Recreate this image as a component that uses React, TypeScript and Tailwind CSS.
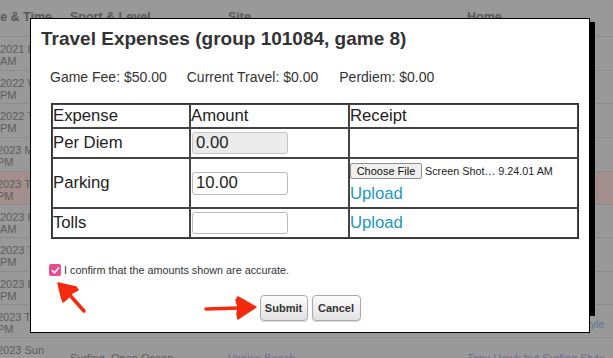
import React from "react";

const rows = [
  { a: "2021 F", b: "AM", h: "h-[34px]", off: "", tint: false, c2: "", c3: "", c4: "" },
  { a: "2022 W", b: "PM", h: "h-[33px]", off: "", tint: false, c2: "", c3: "", c4: "" },
  { a: "2022 T", b: "PM", h: "h-[34px]", off: "", tint: false, c2: "", c3: "", c4: "" },
  { a: "2023 M", b: "PM", h: "h-[34px]", off: "-ml-[3px]", tint: false, c2: "", c3: "", c4: "" },
  { a: "2023 Tu", b: "PM", h: "h-[33px]", off: "-ml-[3px]", tint: true, c2: "", c3: "", c4: "" },
  { a: "2023 F", b: "AM", h: "h-[33px]", off: "", tint: false, c2: "", c3: "", c4: "" },
  { a: "2023 T", b: "PM", h: "h-[34px]", off: "", tint: false, c2: "", c3: "", c4: "" },
  { a: "2023 F", b: "PM", h: "h-[33px]", off: "", tint: false, c2: "", c3: "", c4: "" },
  { a: "2023 Th", b: "PM", h: "h-[33px]", off: "-ml-[3px]", tint: false, c2: "Surfing, Open Ocean", c3: "Venice Beach", c4: "Tony Hawk but Surfing Style" },
  { a: "2023 Sun", b: "PM", h: "h-[34px]", off: "-ml-[3px]", tint: false, c2: "Surfing, Open Ocean", c3: "Venice Beach", c4: "Tony Hawk but Surfing Style" },
];

export default function App() {
  return (
    <div className="relative w-[613px] h-[358px] overflow-hidden bg-[#999999] font-['Liberation_Sans',Arial,sans-serif]">
      {/* background table */}
      <div className="w-[700px]">
        <div className="flex h-[37px] border-b border-[#8b8b8b] pt-[10px] text-[12.5px] font-bold leading-[14px] text-[#5a5a5a]">
          <div className="w-[70px] shrink-0 overflow-hidden"><span className="-ml-[20px] block whitespace-nowrap">Date &amp; Time</span></div>
          <div className="w-[158px] shrink-0">Sport &amp; Level</div>
          <div className="w-[239px] shrink-0">Site</div>
          <div className="flex-1">Home</div>
        </div>
        {rows.map((r, i) => (
          <div
            key={i}
            className={`flex items-center border-b border-[#8b8b8b] text-[11px] leading-[12px] text-[#5c5c5c] ${r.h} ${r.tint ? "bg-[#a28f8d]" : ""}`}
          >
            <div className="w-[70px] shrink-0 overflow-hidden pt-[3px]">
              <div className={`whitespace-nowrap ${r.off}`}>{r.a}</div>
              <div className={`whitespace-nowrap ${r.off}`}>{r.b}</div>
            </div>
            <div className="w-[158px] shrink-0 whitespace-nowrap pt-[6px]">{r.c2}</div>
            <div className="w-[239px] shrink-0 whitespace-nowrap pt-[6px] text-[#5f7398]">{r.c3}</div>
            <div className="flex-1 whitespace-nowrap pt-[6px] text-[#5f7398]">{r.c4}</div>
          </div>
        ))}
      </div>

      {/* modal shadow */}
      <div className="absolute left-[590px] top-[22px] w-[5px] h-[294px] bg-black" />

      {/* modal */}
      <div className="absolute left-[30px] top-[18px] w-[560px] h-[315px] border border-black bg-white px-[10px] pt-[8px] text-[#333]">
        <h1 className="text-[19px] font-bold leading-[24px] text-[#333] whitespace-nowrap">
          Travel Expenses (group 101084, game 8)
        </h1>
        <div className="mt-[18px] pl-[9px] flex text-[14px] leading-[16px] text-[#333] whitespace-nowrap">
          <span className="mr-[20px]">Game Fee: $50.00</span>
          <span className="mr-[21px]">Current Travel: $0.00</span>
          <span>Perdiem: $0.00</span>
        </div>
        <table className="mt-[18px] ml-[10px] w-[528px] border-separate border-spacing-0 border border-[#333] text-[16.7px] leading-[20px] text-[#222]">
          <tbody>
            <tr>
              <td className="h-[24px] w-[138px] border border-[#444] p-0">Expense</td>
              <td className="h-[24px] w-[159px] border border-[#444] p-0">Amount</td>
              <td className="h-[24px] border border-[#444] p-0">Receipt</td>
            </tr>
            <tr>
              <td className="h-[30px] border border-[#444] p-0">Per Diem</td>
              <td className="h-[30px] border border-[#444] p-0">
                <div className="ml-[1px] flex h-[22px] w-[96px] items-center rounded-[3px] border border-[#c4c4c4] bg-[#ebebeb] pl-[3px] text-[#222]">0.00</div>
              </td>
              <td className="h-[30px] border border-[#444] p-0"></td>
            </tr>
            <tr>
              <td className="h-[50px] border border-[#444] p-0">Parking</td>
              <td className="h-[50px] border border-[#444] p-0">
                <div className="ml-[1px] flex h-[23px] w-[96px] items-center rounded-[3px] border border-[#b9b9b9] bg-white pl-[3px] text-[#222]">10.00</div>
              </td>
              <td className="h-[50px] border border-[#444] p-0">
                <div className="flex h-[20px] items-center whitespace-nowrap">
                  <span className="flex h-[16px] w-[72px] items-center justify-center rounded-[2px] border border-[#8f8f8f] bg-[#efefef] text-[11px] leading-[12px] text-[#111]">Choose File</span>
                  <span className="ml-[3px] text-[10.8px] leading-[12px] text-[#222]">Screen Shot… 9.24.01 AM</span>
                </div>
                <div className="leading-[25px] text-[#1a98be]">Upload</div>
              </td>
            </tr>
            <tr>
              <td className="h-[30px] border border-[#444] p-0">Tolls</td>
              <td className="h-[30px] border border-[#444] p-0">
                <div className="ml-[1px] h-[22px] w-[96px] rounded-[3px] border border-[#b9b9b9] bg-white"></div>
              </td>
              <td className="h-[30px] border border-[#444] p-0 text-[#1a98be]">Upload</td>
            </tr>
          </tbody>
        </table>

        <div className="mt-[25px] ml-[8px] flex items-center">
          <span className="flex h-[12px] w-[12px] items-center justify-center rounded-[2px] bg-[#ea4a8e]">
            <svg width="9" height="9" viewBox="0 0 10 10">
              <path d="M1.5 5.2 L4 7.6 L8.6 2" fill="none" stroke="white" strokeWidth="1.8" strokeLinecap="round" strokeLinejoin="round" />
            </svg>
          </span>
          <span className="ml-[3px] text-[10.8px] leading-[12px] text-[#333] whitespace-nowrap">I confirm that the amounts shown are accurate.</span>
        </div>

        <div className="mt-[19px] flex justify-center gap-[4px]">
          <button className="h-[26px] w-[48px] rounded-[4px] border border-[#a9a9a9] bg-linear-to-b from-[#fdfdfd] to-[#e2e2e2] text-[11px] font-bold text-[#333] shadow-[0_1px_1px_rgba(0,0,0,0.15)]">Submit</button>
          <button className="h-[26px] w-[49px] rounded-[4px] border border-[#a9a9a9] bg-linear-to-b from-[#fdfdfd] to-[#e2e2e2] text-[11px] font-bold text-[#333] shadow-[0_1px_1px_rgba(0,0,0,0.15)]">Cancel</button>
        </div>
      </div>

      {/* red annotation arrows */}
      <svg className="pointer-events-none absolute left-0 top-0" width="613" height="358" viewBox="0 0 613 358">
        <g fill="#f42a0e" stroke="#f42a0e" strokeLinejoin="round" strokeLinecap="round">
          <path d="M58 283 L76 287 L78 290 L72 293 L67 299 L63 302 L61 296 Z" strokeWidth="1.5" />
          <path d="M68 293 L76 302 L84 311" fill="none" strokeWidth="3.5" />
          <path d="M256 307 L238 297 L236 300 L238 307 L237 314 L238 319 Z" strokeWidth="1.5" />
          <path d="M206 309 L222 308.5 L240 308" fill="none" strokeWidth="3.5" />
        </g>
      </svg>
    </div>
  );
}
